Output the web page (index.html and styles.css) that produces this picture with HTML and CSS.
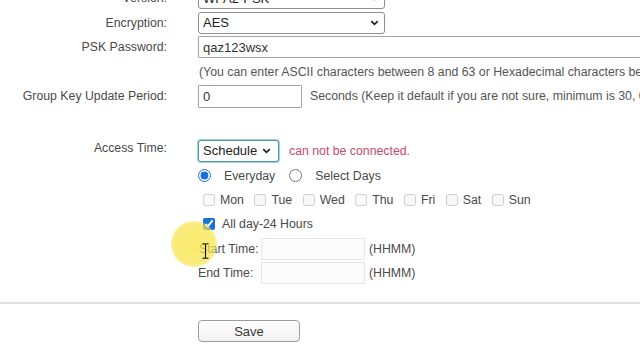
FILE: index.html
```html
<!DOCTYPE html>
<html>
<head>
<meta charset="utf-8">
<title>Wireless Security</title>
<link rel="stylesheet" href="styles.css">
</head>
<body>
<form class="form">
  <div class="row">
    <span class="lbl">Version:</span>
    <div class="select wide"><span>WPA2-PSK</span><svg class="chev" viewBox="0 0 10 7"><path d="M1.2 1.2 L5 5 L8.8 1.2" fill="none" stroke="#222" stroke-width="2"/></svg></div>
  </div>
  <div class="row">
    <span class="lbl">Encryption:</span>
    <div class="select wide"><span>AES</span><svg class="chev" viewBox="0 0 10 7"><path d="M1.2 1.2 L5 5 L8.8 1.2" fill="none" stroke="#222" stroke-width="2"/></svg></div>
  </div>
  <div class="row">
    <span class="lbl">PSK Password:</span>
    <input class="field psk" type="text" value="qaz123wsx">
  </div>
  <div class="row">
    <span class="lbl"></span>
    <span class="hint">(You can enter ASCII characters between 8 and 63 or Hexadecimal characters between 8 and 64.)</span>
  </div>
  <div class="row">
    <span class="lbl">Group Key Update Period:</span>
    <input class="field period" type="text" value="0">
    <span class="note">Seconds (Keep it default if you are not sure, minimum is 30, 0 means no update.)</span>
  </div>

  <div class="row access">
    <span class="lbl">Access Time:</span>
    <div class="stack">
      <div class="sub first">
        <div class="select focus"><span>Schedule</span><svg class="chev" viewBox="0 0 10 7"><path d="M1.2 1.2 L5 5 L8.8 1.2" fill="none" stroke="#222" stroke-width="2"/></svg></div>
        <span class="warn">can not be connected.</span>
      </div>
      <div class="sub radios">
        <label class="opt"><input type="radio" name="days" checked><span>Everyday</span></label>
        <label class="opt"><input type="radio" name="days"><span>Select Days</span></label>
      </div>
      <div class="sub days">
        <label class="day"><input type="checkbox" disabled><span>Mon</span></label>
        <label class="day"><input type="checkbox" disabled><span>Tue</span></label>
        <label class="day"><input type="checkbox" disabled><span>Wed</span></label>
        <label class="day"><input type="checkbox" disabled><span>Thu</span></label>
        <label class="day"><input type="checkbox" disabled><span>Fri</span></label>
        <label class="day"><input type="checkbox" disabled><span>Sat</span></label>
        <label class="day"><input type="checkbox" disabled><span>Sun</span></label>
      </div>
      <div class="sub allday">
        <label class="day"><input type="checkbox" checked><span>All day-24 Hours</span></label>
      </div>
      <div class="sub time">
        <span class="tlabel">Start Time:</span>
        <input class="field tfield" type="text" disabled>
        <span class="unit">(HHMM)</span>
      </div>
      <div class="sub time">
        <span class="tlabel end">End Time:</span>
        <input class="field tfield" type="text" disabled>
        <span class="unit">(HHMM)</span>
      </div>
    </div>
  </div>

  <hr class="sep">

  <div class="actions">
    <button type="button" class="btn">Save</button>
  </div>
</form>

<div class="spot"></div>
<svg class="ibeam" viewBox="0 0 7 16"><path d="M0.5 0.8 H2.5 Q3.5 0.8 3.5 2 V14 Q3.5 15.2 2.5 15.2 H0.5 M6.5 0.8 H4.5 Q3.5 0.8 3.5 2 M3.5 14 Q3.5 15.2 4.5 15.2 H6.5" fill="none" stroke="#111" stroke-width="1.1"/></svg>
</body>
</html>
```

FILE: styles.css
```css
html, body {
  margin: 0;
  padding: 0;
}

body {
  width: 640px;
  height: 360px;
  overflow: hidden;
  position: relative;
  background: #fff;
  font-family: "Liberation Sans", Arial, sans-serif;
  font-size: 12.3px;
  color: #4a4a4a;
}

.form {
  margin: -14px 0 0 0;
}

.row {
  display: flex;
  align-items: center;
  height: 24.5px;
  white-space: nowrap;
}

.lbl {
  flex: none;
  width: 167px;
  margin-right: 31px;
  text-align: right;
}

.select {
  box-sizing: border-box;
  height: 22px;
  border: 1px solid #8e8e8e;
  border-radius: 3px;
  display: flex;
  align-items: center;
  justify-content: space-between;
  padding: 0 5px 0 4px;
  background: #fff;
  color: #222;
  font-size: 13px;
}

.select.wide {
  width: 187px;
}

.select.focus {
  width: 81px;
  border: 1px solid #4f95a3;
  box-shadow: 0 0 0 1px #9fd2dc;
  padding-right: 7px;
}

.chev {
  width: 9px;
  height: 6px;
  flex: none;
}

.field {
  box-sizing: border-box;
  height: 22px;
  margin: 0;
  border: 1px solid #a3a3a3;
  border-radius: 1px;
  padding: 0 4px;
  font-family: "Liberation Sans", Arial, sans-serif;
  font-size: 13px;
  color: #333;
  background: #fff;
  outline: none;
}

.psk {
  width: 460px;
  flex: none;
}

.period {
  width: 104px;
  height: 23px;
  flex: none;
}

.hint {
  color: #555;
  padding-left: 1px;
}

.note {
  margin-left: 8px;
  color: #555;
}

.access {
  height: auto;
  align-items: flex-start;
  margin-top: 29.5px;
}

.access .lbl {
  line-height: 21px;
}

.stack {
  display: flex;
  flex-direction: column;
}

.sub {
  display: flex;
  align-items: center;
  height: 24.5px;
}

.sub.first {
  height: 25.5px;
}

.warn {
  margin-left: 10px;
  color: #c64a6c;
}

.radios {
  height: 24px;
}

.opt {
  display: flex;
  align-items: center;
  margin-right: 14px;
}

.opt input {
  width: 13px;
  height: 13px;
  margin: 0 13px 0 0;
  accent-color: #1a6fdc;
}

.days {
  padding-left: 5px;
  gap: 10.5px;
}

.day {
  display: flex;
  align-items: center;
  gap: 5px;
}

.day input {
  width: 12px;
  height: 12px;
  margin: 0;
  accent-color: #1a6fdc;
}

.allday {
  padding-left: 5px;
}

.allday .day {
  gap: 7px;
}

.tlabel {
  width: 62px;
  padding-left: 1px;
  flex: none;
}

.tlabel.end {
  padding-left: 0;
  width: 63px;
}

.tfield {
  width: 104px;
  border-color: #e6e6e6;
  background: #fcfcfc;
}

.unit {
  margin-left: 4px;
}

.sep {
  margin: 16.5px 0 0 0;
  border: 0;
  border-top: 2px solid #dedede;
  height: 0;
}

.actions {
  padding: 16px 0 0 198px;
}

.btn {
  box-sizing: border-box;
  width: 102px;
  height: 22px;
  margin: 0;
  border: 1px solid #9d9d9d;
  border-radius: 4px;
  background: linear-gradient(#ffffff, #f1f1f1);
  font-family: "Liberation Sans", Arial, sans-serif;
  font-size: 13px;
  color: #3a3a3a;
  padding: 0;
}

.spot {
  position: absolute;
  left: 171px;
  top: 221px;
  width: 46px;
  height: 46px;
  border-radius: 50%;
  background: radial-gradient(circle, rgba(247, 228, 70, 0.78) 0%, rgba(247, 228, 70, 0.72) 60%, rgba(247, 228, 70, 0.32) 85%, rgba(247, 228, 70, 0) 100%);
}

.ibeam {
  position: absolute;
  left: 202px;
  top: 243px;
  width: 7px;
  height: 16px;
}
```
